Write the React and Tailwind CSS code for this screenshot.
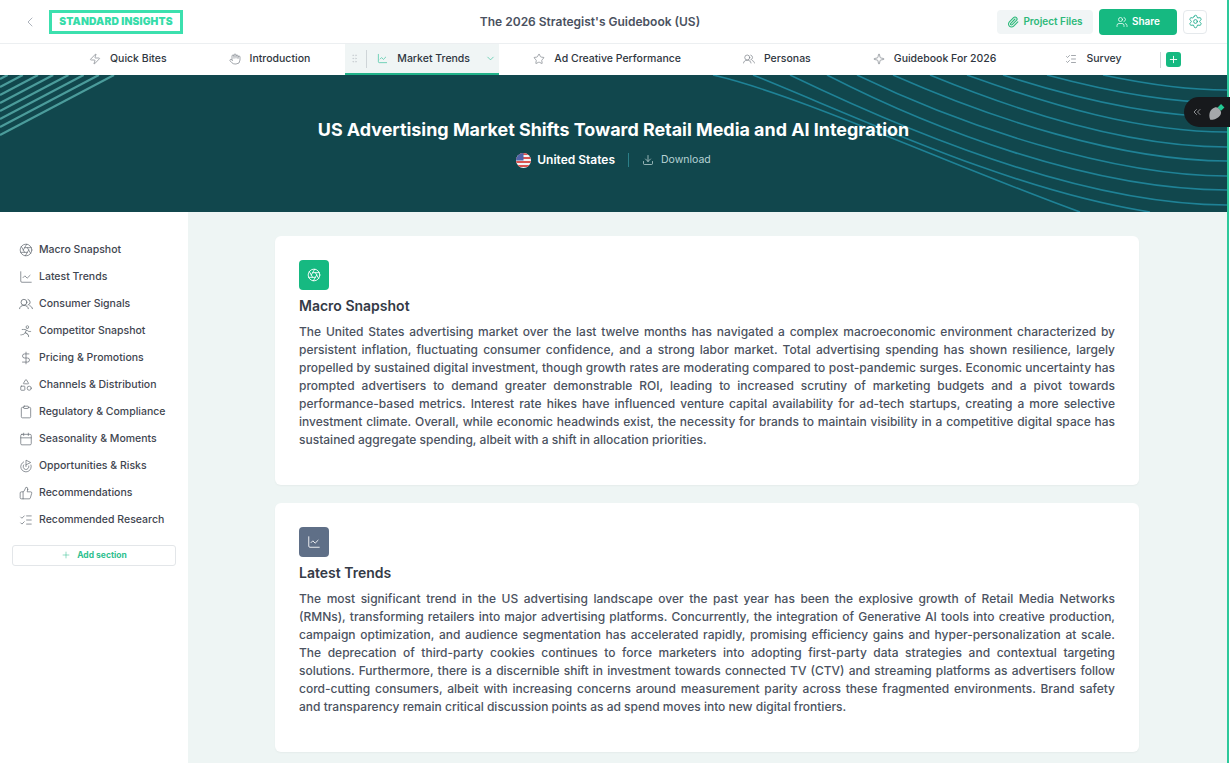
import React from 'react';
import { ChevronLeft, ChevronDown, Zap, Hand, ChartLine, Star, Sparkle, ListChecks, Paperclip, Settings, Plus, Download, Aperture, DollarSign, Shapes, Clipboard, Calendar, Goal, ThumbsUp, ChevronsLeft, GripVertical, Users } from 'lucide-react';
import { PiPersonSimpleRunLight } from 'react-icons/pi';

const TwoHeads = ({ size = 14, className = '' }) => (
  <svg width={size} height={size} viewBox="0 0 24 24" fill="none" stroke="currentColor" strokeWidth="1.4" strokeLinecap="round" className={className}>
    <circle cx="8.5" cy="9" r="5" />
    <path d="M1 20c.5-3.5 3-5.5 7.5-5.5S15.500 16.500 16 20" />
    <path d="M15.500 4.200a5 5 0 0 1 0 9.600M18.500 15c2.500.8 4 2.600 4.500 5" />
  </svg>
);

const tabs = [
  { name: 'Quick Bites', icon: Zap },
  { name: 'Introduction', icon: Hand },
  { name: 'Market Trends', icon: ChartLine, active: true },
  { name: 'Ad Creative Performance', icon: Star },
  { name: 'Personas', icon: TwoHeads },
  { name: 'Guidebook For 2026', icon: Sparkle },
  { name: 'Survey', icon: ListChecks },
];

const sections = [
  { name: 'Macro Snapshot', icon: Aperture },
  { name: 'Latest Trends', icon: ChartLine },
  { name: 'Consumer Signals', icon: TwoHeads },
  { name: 'Competitor Snapshot', icon: PiPersonSimpleRunLight },
  { name: 'Pricing & Promotions', icon: DollarSign },
  { name: 'Channels & Distribution', icon: Shapes },
  { name: 'Regulatory & Compliance', icon: Clipboard },
  { name: 'Seasonality & Moments', icon: Calendar },
  { name: 'Opportunities & Risks', icon: Goal },
  { name: 'Recommendations', icon: ThumbsUp },
  { name: 'Recommended Research', icon: ListChecks },
];

const cards = [
  {
    title: 'Macro Snapshot',
    icon: Aperture,
    tint: 'bg-[#16b981]',
    text: 'The United States advertising market over the last twelve months has navigated a complex macroeconomic environment characterized by persistent inflation, fluctuating consumer confidence, and a strong labor market. Total advertising spending has shown resilience, largely propelled by sustained digital investment, though growth rates are moderating compared to post-pandemic surges. Economic uncertainty has prompted advertisers to demand greater demonstrable ROI, leading to increased scrutiny of marketing budgets and a pivot towards performance-based metrics. Interest rate hikes have influenced venture capital availability for ad-tech startups, creating a more selective investment climate. Overall, while economic headwinds exist, the necessity for brands to maintain visibility in a competitive digital space has sustained aggregate spending, albeit with a shift in allocation priorities.',
  },
  {
    title: 'Latest Trends',
    icon: ChartLine,
    tint: 'bg-[#5f6f87]',
    text: 'The most significant trend in the US advertising landscape over the past year has been the explosive growth of Retail Media Networks (RMNs), transforming retailers into major advertising platforms. Concurrently, the integration of Generative AI tools into creative production, campaign optimization, and audience segmentation has accelerated rapidly, promising efficiency gains and hyper-personalization at scale. The deprecation of third-party cookies continues to force marketers into adopting first-party data strategies and contextual targeting solutions. Furthermore, there is a discernible shift in investment towards connected TV (CTV) and streaming platforms as advertisers follow cord-cutting consumers, albeit with increasing concerns around measurement parity across these fragmented environments. Brand safety and transparency remain critical discussion points as ad spend moves into new digital frontiers.',
  },
];

const wavePaths = [
  'M1103 75C1150 85 1190 90 1227 90',
  'M1047 75C1110 92 1170 103 1227 103',
  'M1003 75C1080 100 1160 117 1227 117',
  'M967 75C1050 105 1140 132 1227 132',
  'M930 75C1020 112 1130 147 1227 147',
  'M893 75C990 118 1120 161 1227 161',
  'M857 75C960 125 1110 176 1227 176',
  'M827 75C930 128 1090 190 1227 190',
  'M790 75C900 128 1080 205 1227 205',
  'M753 75C860 118 1010 190 1150 212',
  'M713 75C800 95 950 165 1080 212',
];

const stripes = [135, 127, 119, 111, 103, 95, 87, 79];

const Waves = () => (
  <svg className="absolute left-0 top-0 w-full h-full" viewBox="0 75 1227 137" preserveAspectRatio="none" fill="none">
    {wavePaths.map((d) => (
      <path key={d} d={d} stroke="#1f8296" strokeWidth="1.6" />
    ))}
    {stripes.map((y) => (
      <path key={y} d={`M0 ${y}L${(y - 75) * 1.9} 75`} stroke="#4b9c9b" strokeWidth="2.2" />
    ))}
  </svg>
);

const UsFlag = () => (
  <svg width="15" height="15" viewBox="0 0 30 30" className="rounded-full">
    <rect width="30" height="30" fill="#f3f4f6" />
    {[0, 8, 16, 24].map((y) => (
      <rect key={y} y={y} width="30" height="4" fill="#d9534f" />
    ))}
    <rect width="15" height="15" fill="#4f63a8" />
  </svg>
);

export default function App() {
  return (
    <div className="h-[763px] overflow-hidden bg-white pr-[1px] font-['Inter',sans-serif] relative">
      <div className="border-r-2 border-r-[#2dc99b]">
        <header className="h-[44px] flex items-center border-b border-[#eceff1] bg-white">
          <div className="flex items-center pl-[22px]">
            <ChevronLeft size={16} strokeWidth={1.25} className="text-[#9ca3af]" />
            <div className="ml-[11px] h-[24px] w-[134px] border-[3px] border-[#3ce0ae] flex items-center justify-center text-[10.300px] font-black text-[#35dca9] tracking-[0.15px]">
              STANDARD INSIGHTS
            </div>
          </div>
          <div className="flex-1 text-center text-[12px] font-semibold text-[#4a5160]">The 2026 Strategist's Guidebook (US)</div>
          <div className="flex items-center gap-[6px] pr-[20px]">
            <button className="h-[24px] w-[96px] rounded-[4px] bg-[#f1f5f6] flex items-center justify-center gap-[4px] text-[10px] font-semibold text-[#2cb979]">
              <Paperclip size={12} strokeWidth={2.2} />
              Project Files
            </button>
            <button className="h-[26px] w-[78px] rounded-[4px] bg-[#16b981] flex items-center justify-center gap-[4px] text-[10px] font-semibold text-white">
              <Users size={12} strokeWidth={1.5} />
              Share
            </button>
            <button className="h-[24px] w-[24px] rounded-[4px] border border-[#e5e9ec] flex items-center justify-center text-[#18a98a]">
              <Settings size={15} strokeWidth={1.4} />
            </button>
          </div>
        </header>

        <nav className="h-[31px] flex items-stretch pl-[58px] bg-white">
          {tabs.map(({ name, icon: Icon, active }) =>
            active ? (
              <div key={name} className="w-[154px] ml-[4px] mr-[3px] flex items-center bg-[#f0f5f5] border-b-2 border-[#22b38a] text-[10.500px] font-medium text-[#2f3640]">
                <GripVertical size={11} strokeWidth={1.25} className="ml-[4px] text-[#c4c9ce]" />
                <span className="ml-[6px] h-[18px] border-l border-[#cfd5d8]"></span>
                <Icon size={11} strokeWidth={1.4} className="ml-[10px] text-[#2fbf98]" />
                <span className="ml-[9px]">{name}</span>
                <ChevronDown size={11} strokeWidth={1.4} className="ml-auto mr-[3px] text-[#2fbf98]" />
              </div>
            ) : (
              <div key={name} className={`flex items-center px-[31px] border-b-2 border-transparent text-[10.500px] font-medium text-[#2f3640] ${name === 'Survey' ? 'ml-[7px]' : ''}`}>
                <Icon size={12} strokeWidth={1.4} className="text-[#7c828a] mr-[9px]" />
                {name}
              </div>
            )
          )}
          <div className="flex items-center ml-[7px]">
            <span className="h-[16px] border-l border-[#cfd5d8]"></span>
            <span className="ml-[5px] w-[15px] h-[15px] rounded-[3px] bg-[#16b981] flex items-center justify-center text-white">
              <Plus size={11} strokeWidth={2} />
            </span>
          </div>
        </nav>

        <section className="relative h-[137px] bg-[#11474d] flex flex-col items-center overflow-hidden">
          <Waves />
          <h1 className="relative mt-[43px] text-[17.900px] font-bold text-white leading-[24px]">US Advertising Market Shifts Toward Retail Media and AI Integration</h1>
          <div className="relative mt-[9px] flex items-center text-[12px]">
            <UsFlag />
            <span className="ml-[6px] font-semibold text-white">United States</span>
            <span className="ml-[13px] h-[14px] border-l border-[#2b7f88]"></span>
            <Download size={12} strokeWidth={1.4} className="ml-[13px] text-[#cfe2e3]" />
            <span className="ml-[7px] text-[10.500px] text-[#b7d3d5]">Download</span>
          </div>
        </section>

        <div className="flex h-[551px]">
          <aside className="w-[188px] shrink-0 bg-white pt-[24px] px-[12px]">
            {sections.map(({ name, icon: Icon }) => (
              <div key={name} className="h-[27px] flex items-center pl-[7px] text-[10.500px] text-[#3f4650] font-medium">
                <Icon size={14} strokeWidth={1.25} className="text-[#666d75] mr-[6px] shrink-0" />
                {name}
              </div>
            ))}
            <button className="mt-[12px] pb-[1px] w-[164px] h-[21px] rounded-[3px] border border-[#e3e6e9] flex items-center justify-center gap-[6px] text-[8.500px] font-bold text-[#2fbf8f]">
              <Plus size={10} strokeWidth={1.25} />
              Add section
            </button>
          </aside>
          <main className="flex-1 bg-[#eef5f4] pt-[24px] pl-[87px]">
            {cards.map(({ title, icon: Icon, tint, text }) => (
              <article key={title} className="w-[864px] h-[249px] mb-[18px] bg-white rounded-[6px] p-[24px] shadow-[0_1px_2px_rgba(0,0,0,0.04)]">
                <div className={`w-[30px] h-[30px] rounded-[4px] ${tint} flex items-center justify-center text-white`}>
                  <Icon size={14} strokeWidth={1.5} />
                </div>
                <h2 className="mt-[7px] text-[14px] font-semibold leading-[18px] text-[#343a46]">{title}</h2>
                <p className="mt-[8px] text-[12px] leading-[18px] font-medium text-[#4b5260] text-justify">{text}</p>
              </article>
            ))}
          </main>
        </div>
      </div>

      <div className="absolute right-0 top-[97px] w-[46px] h-[30px] rounded-l-full bg-[#17191c] flex items-center pl-[7px] gap-[5px]">
        <ChevronsLeft size={12} strokeWidth={1.5} className="text-[#b4b7ba]" />
        <svg width="17" height="17" viewBox="0 0 15 15">
          <path d="M2 14C0 9 2 4 6 3C8 2.500 11 4 11.500 7C12 10 8 14 2 14Z" fill="#a5a8ab" />
          <path d="M11.500 0L14.500 3L11.500 6L8.500 3Z" fill="#22c993" />
        </svg>
      </div>
    </div>
  );
}
